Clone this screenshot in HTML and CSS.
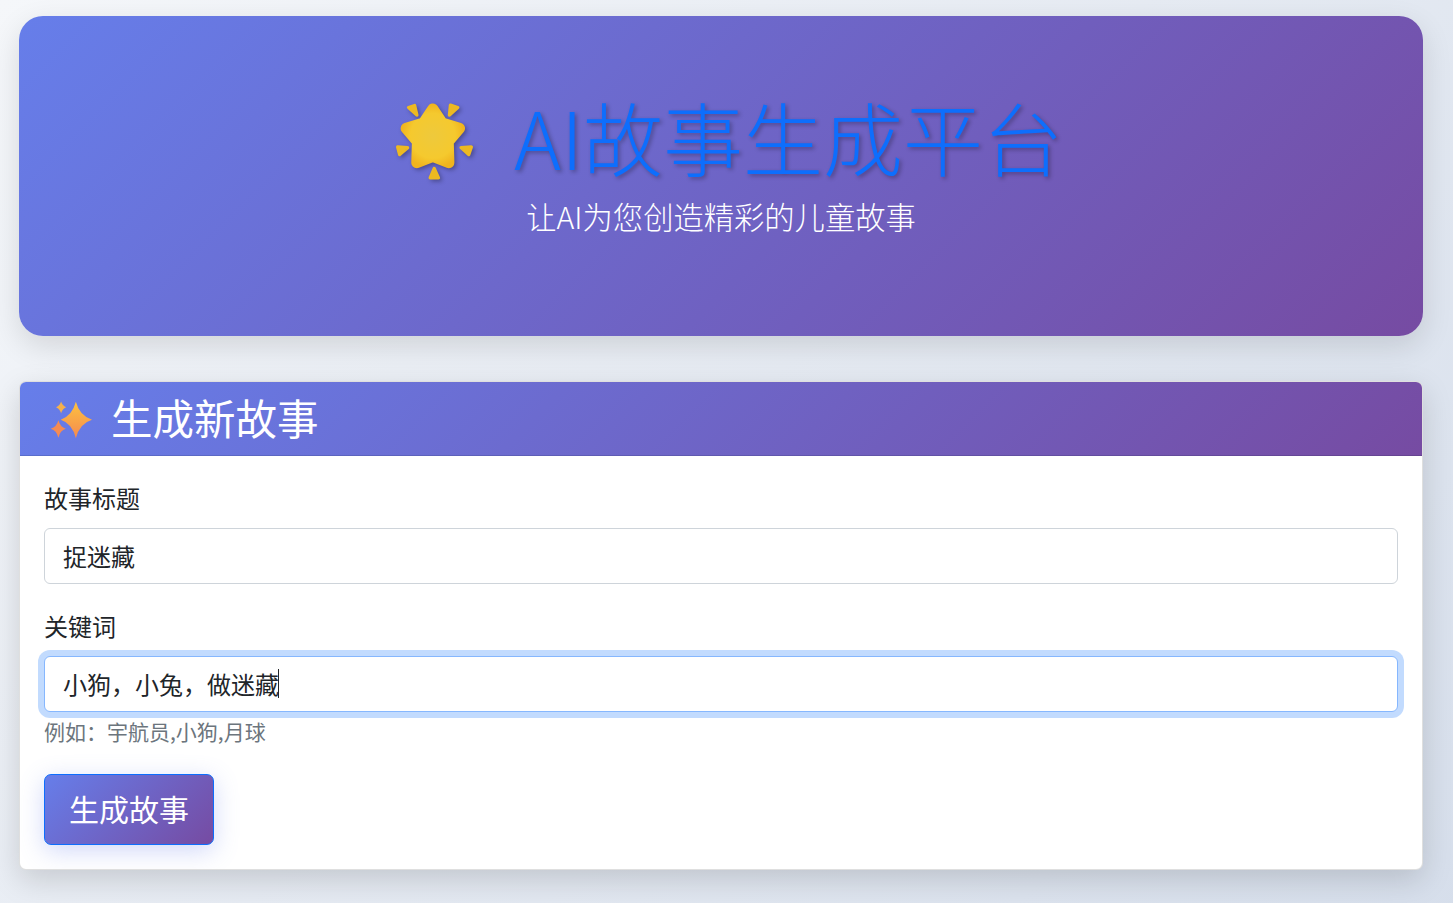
FILE: index.html
```html
<!DOCTYPE html>
<html lang="zh-CN">
<head>
  <meta charset="UTF-8">
  <meta name="viewport" content="width=device-width, initial-scale=1.0">
  <title>AI故事生成平台</title>
  <link rel="stylesheet" href="styles.css">
</head>
<body>
  <div class="container">
    <!-- Hero -->
    <header class="hero">
      <h1 class="hero-title">
        <svg class="star-icon" viewBox="40 60 250 240" aria-hidden="true">
          <defs>
            <radialGradient id="star-fill" cx="50%" cy="50%" r="60%">
              <stop offset="0" stop-color="#eec93c"/>
              <stop offset="0.7" stop-color="#f5c92e"/>
              <stop offset="1" stop-color="#f0b41e"/>
            </radialGradient>
          </defs>
          <path class="star-body" d="M160 84 L188 126 L240 142 L206 182 L208 245 L160 226 L112 245 L114 182 L80 142 L132 126 Z"/>
          <path class="star-ray" d="M87 79 L105 73 L112 102 Z"/>
          <path class="star-ray" d="M235 79 L213 72 L210 102 Z"/>
          <path class="star-ray" d="M54 198 L84 200 L60 221 Z"/>
          <path class="star-ray" d="M276 198 L245 200 L268 221 Z"/>
          <path class="star-ray" d="M164 263 L177 291 L152 291 Z"/>
        </svg>AI故事生成平台
      </h1>
      <p class="hero-sub">让AI为您创造精彩的儿童故事</p>
    </header>

    <!-- Form card -->
    <section class="card">
      <h3 class="card-header">
        <svg class="sparkle-icon" viewBox="120 78 128 112" aria-hidden="true">
          <defs>
            <linearGradient id="spark-fill" x1="0" y1="0" x2="0" y2="1">
              <stop offset="0" stop-color="#fdc23f"/>
              <stop offset="1" stop-color="#f58a50"/>
            </linearGradient>
          </defs>
          <path fill="url(#spark-fill)" d="M197 80 Q208 122 245 133 Q208 144 197 188 Q186 144 152 133 Q186 122 197 80 Z"/>
          <path fill="#f3b04e" d="M153 79 Q157 92 168 96 Q157 100 153 114 Q149 100 138 96 Q149 92 153 79 Z"/>
          <path fill="#f58b52" d="M145 135 Q150 155 167 160 Q150 165 145 187 Q140 165 122 160 Q140 155 145 135 Z"/>
        </svg>生成新故事
      </h3>
      <form class="card-body">
        <div class="field">
          <label for="story-title">故事标题</label>
          <input type="text" id="story-title" value="捉迷藏">
        </div>
        <div class="field">
          <label for="story-keywords">关键词</label>
          <div class="input-wrap">
            <input type="text" id="story-keywords" value="小狗，小兔，做迷藏" autofocus>
            <span class="caret"></span>
          </div>
          <div class="hint">例如：宇航员,小狗,月球</div>
        </div>
        <button type="submit" class="submit-btn">生成故事</button>
      </form>
    </section>
  </div>
</body>
</html>
```

FILE: styles.css
```css
/* Base Styling */
* {
  box-sizing: border-box;
}

html {
  font-size: 24px;
}

body {
  margin: 0;
  min-height: 100vh;
  font-family: "Noto Sans CJK SC", "Liberation Sans", sans-serif;
  font-size: 1rem;
  line-height: 1.5;
  color: #212529;
  background: linear-gradient(135deg, #f5f7fa, #c3cfe2) no-repeat;
  background-size: 100% 2380px;
  background-color: #dde3ee;
}

.container {
  padding: 16px 30px 33px 19px;
}

.hero {
  padding: 72px 24px;
  margin-bottom: 45px;
  text-align: center;
  color: #fff;
  border-radius: 24px;
  background: linear-gradient(135deg, #667eea, #764ba2);
  box-shadow: 0 10px 30px rgba(0, 0, 0, 0.12);
}

.hero-title {
  margin: 0 0 10px;
  font-size: 80px;
  font-weight: 300;
  line-height: 94px;
  height: 96px;
  color: #0d6efd;
  text-shadow: 2px 2px 4px rgba(0, 0, 0, 0.3);
}

.star-icon {
  width: 83px;
  height: 80px;
  margin: 0 38px 0 14px;
  vertical-align: -11px;
  filter: drop-shadow(2px 2px 2px rgba(0, 0, 0, 0.3));
}

.star-body {
  fill: url(#star-fill);
  stroke: url(#star-fill);
  stroke-width: 34;
  stroke-linejoin: round;
}

.star-ray {
  fill: #edb922;
  stroke: #edb922;
  stroke-width: 10;
  stroke-linejoin: round;
}

.hero-sub {
  margin: 0 0 25px;
  font-size: 30.3px;
  line-height: 45px;
  font-weight: 300;
}

.card {
  background: #fff;
  border: 1px solid rgba(0, 0, 0, 0.125);
  border-radius: 7px;
  box-shadow: 0 10px 30px rgba(0, 0, 0, 0.15);
  overflow: hidden;
}

.card-header {
  margin: 0;
  padding: 10px 24px 13px;
  font-size: 41.5px;
  font-weight: 400;
  line-height: 50px;
  color: #fff;
  background: linear-gradient(135deg, #667eea, #764ba2);
  border-bottom: 1px solid rgba(0, 0, 0, 0.125);
}

.sparkle-icon {
  width: 43px;
  height: 38px;
  margin: 0 18px 0 6px;
  vertical-align: -4px;
}

.card-body {
  padding: 24px;
}

.field {
  margin-bottom: 24px;
}

label {
  display: block;
  margin-bottom: 12px;
}

.input-wrap {
  position: relative;
}

input {
  display: block;
  width: 100%;
  padding: 9px 18px;
  font: inherit;
  color: #212529;
  caret-color: transparent;
  background: #fff;
  border: 1px solid #ced4da;
  border-radius: 6px;
}

input:focus {
  border-color: #86b7fe;
  outline: none;
  box-shadow: 0 0 0 6px rgba(13, 110, 253, 0.25);
}

/* the field's own caret doesn't show in a still picture */
.caret {
  position: absolute;
  left: 234px;
  top: 13px;
  width: 1px;
  height: 29px;
  background: #212529;
}

.hint {
  margin: 4px 0 26px;
  font-size: 21px;
  color: #6c757d;
}

.submit-btn {
  padding: 11px 24px 13px;
  font: inherit;
  font-size: 30px;
  color: #fff;
  background: linear-gradient(135deg, #667eea, #764ba2);
  border: 1px solid #0d6efd;
  border-radius: 7px;
  box-shadow: 0 6px 24px rgba(102, 126, 234, 0.3);
  cursor: pointer;
}
```
